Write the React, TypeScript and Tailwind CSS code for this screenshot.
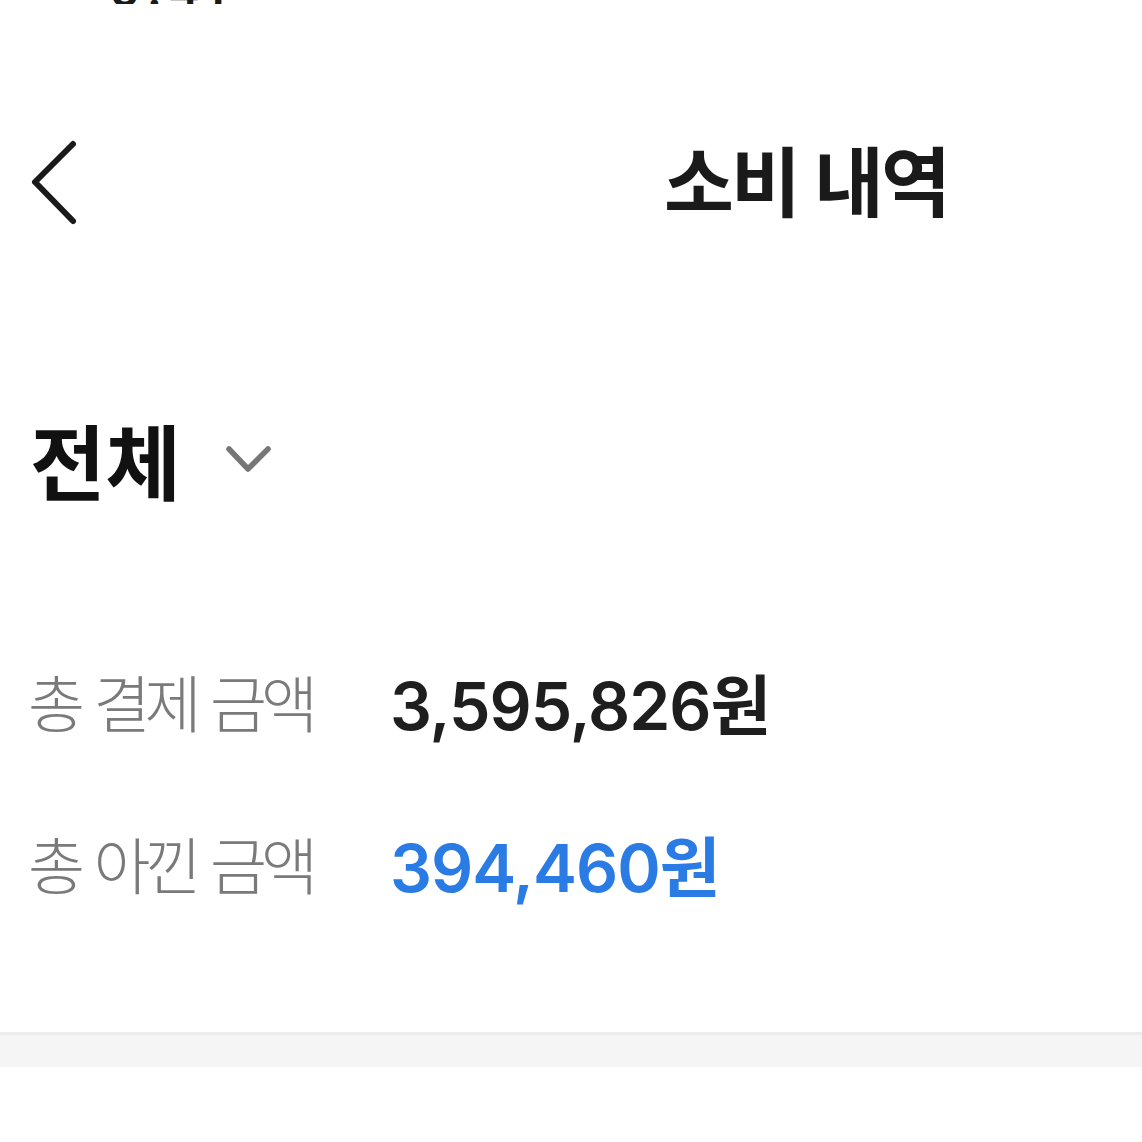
const font = { fontFamily: 'Inter, "Noto Sans CJK KR", sans-serif' };

function BackIcon() {
  return (
    <svg width="50" height="88" viewBox="0 0 50 88" fill="none">
      <path d="M43 5L5 43L43 82" stroke="#1a1a1a" strokeWidth="6" strokeLinecap="round" strokeLinejoin="round" />
    </svg>
  );
}

function DownIcon() {
  return (
    <svg width="48" height="32" viewBox="0 0 48 32" fill="none">
      <path d="M4 5L23 25L43 5" stroke="#777" strokeWidth="5.5" strokeLinecap="round" strokeLinejoin="round" />
    </svg>
  );
}

export default function App() {
  return (
    <div className="w-[1142px] h-[1142px] bg-white overflow-hidden text-[#1a1a1a]" style={font}>
      <div className="h-[4px] overflow-hidden flex items-end pl-[110px]">
        <span className="text-[48px] font-semibold leading-none -mb-[10px] tracking-[6px]">9:41</span>
      </div>

      <div className="flex items-center h-[96px] mt-[131px] pl-[30px]">
        <BackIcon />
        <h1 className="ml-[584px] text-[76px] font-semibold tracking-[-3px] leading-none">소비 내역</h1>
      </div>

      <div className="flex items-center mt-[193px] pl-[30px]">
        <span className="text-[82px] font-bold leading-none text-[#111]">전체</span>
        <span className="ml-[44px] -mt-[10px] flex">
          <DownIcon />
        </span>
      </div>

      <div className="flex flex-col gap-[96px] mt-[167px] pl-[28px]">
        <div className="flex items-center leading-none">
          <span className="w-[362px] text-[62px] font-light text-[#7a7a7a] tracking-[-6px] [word-spacing:3px]">총 결제 금액</span>
          <span className="text-[66px] font-semibold text-[#1e1e1e] tracking-[-1px]">3,595,826원</span>
        </div>
        <div className="flex items-center leading-none">
          <span className="w-[362px] text-[62px] font-light text-[#7a7a7a] tracking-[-6px] [word-spacing:3px]">총 아낀 금액</span>
          <span className="text-[66px] font-semibold text-[#2b7be5] tracking-[-1px]">394,460원</span>
        </div>
      </div>

      <div className="mt-[131px] h-[35px] bg-[#f5f5f5] border-t-[3px] border-[#ececec]" />
    </div>
  );
}
